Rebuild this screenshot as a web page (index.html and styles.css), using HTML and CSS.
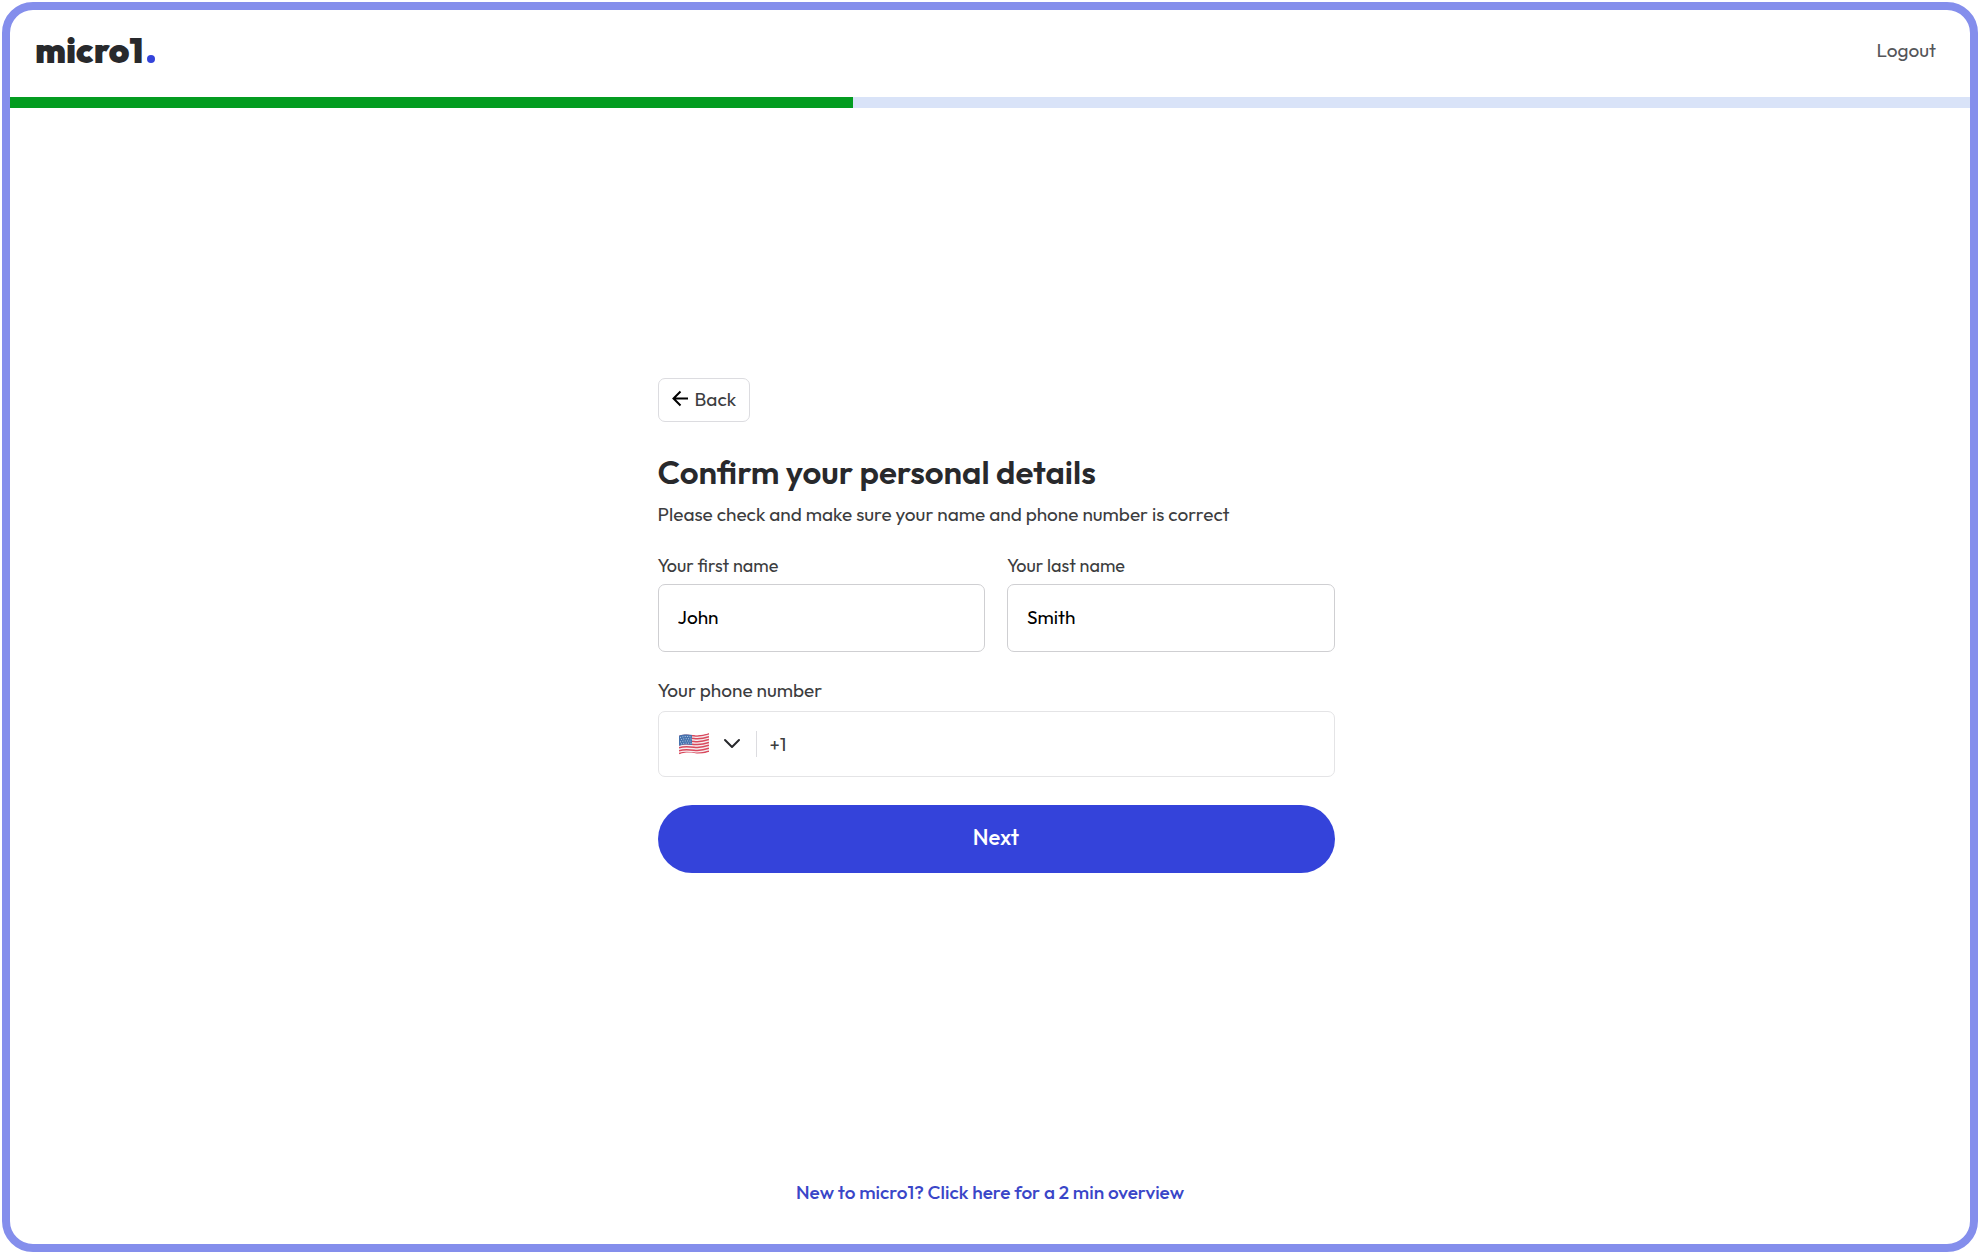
FILE: index.html
```html
<!DOCTYPE html>
<html lang="en">
<head>
    <meta charset="UTF-8">
    <meta name="viewport" content="width=device-width, initial-scale=1.0">
    <title>micro1 - Confirm your personal details</title>
    <link rel="stylesheet" href="styles.css">
</head>
<body>

    <div class="frame">
        <header class="header">
            <a href="#" class="logo">micro1<span class="logo-dot"></span></a>
            <button type="button" class="logout-button">Logout</button>
        </header>

        <!-- Onboarding progress -->
        <div class="progress" role="progressbar" aria-valuenow="43" aria-valuemin="0" aria-valuemax="100">
            <div class="progress-bar" style="width: 43%"></div>
        </div>

        <main class="main">
            <form class="details-form">
                <button type="button" class="back-button">
                    <svg width="16" height="17" viewBox="0 0 16 17" fill="none" stroke="#000" stroke-width="2">
                        <path d="M16 8.5H2M8.5 1.5L1.5 8.5L8.5 15.5"/>
                    </svg>
                    Back
                </button>

                <h1>Confirm your personal details</h1>
                <p class="subtitle">Please check and make sure your name and phone number is correct</p>

                <div class="name-row">
                    <div class="field">
                        <label for="first-name">Your first name</label>
                        <input type="text" id="first-name" class="input-field" value="John">
                    </div>
                    <div class="field">
                        <label for="last-name">Your last name</label>
                        <input type="text" id="last-name" class="input-field" value="Smith">
                    </div>
                </div>

                <label for="phone" class="phone-label">Your phone number</label>
                <div class="phone-box">
                    <div class="country">
                        <svg class="flag" width="30" height="22" viewBox="0 0 30 22">
                            <defs>
                                <clipPath id="flag-shape">
                                    <path d="M0 2.5C5 0.8 9 1.2 15 2C20 2.6 25 1.8 30 0V19C25 20.8 20 21 15 20C9 19.2 5 19.5 0 21.5Z"/>
                                </clipPath>
                            </defs>
                            <g clip-path="url(#flag-shape)">
                                <rect width="30" height="22" fill="#f6eef0"/>
                                <g fill="none" stroke="#d9485c" stroke-width="1.5">
                                    <path d="M0 3.2C5 1.5 9 1.9 15 2.7C20 3.3 25 2.5 30 .7"/>
                                    <path d="M0 6.1C5 4.4 9 4.8 15 5.6C20 6.2 25 5.4 30 3.6"/>
                                    <path d="M0 9C5 7.3 9 7.7 15 8.5C20 9.1 25 8.3 30 6.5"/>
                                    <path d="M0 11.9C5 10.2 9 10.6 15 11.4C20 12 25 11.2 30 9.4"/>
                                    <path d="M0 14.8C5 13.1 9 13.5 15 14.3C20 14.9 25 14.1 30 12.3"/>
                                    <path d="M0 17.7C5 16 9 16.4 15 17.2C20 17.8 25 17 30 15.2"/>
                                    <path d="M0 20.6C5 18.9 9 19.3 15 20.1C20 20.7 25 19.9 30 18.1"/>
                                </g>
                                <path d="M0 2.5C5 .8 9 1.2 13 1.8V12C9 11.2 5 11 0 12.8Z" fill="#4672ae"/>
                                <g fill="none" stroke="#b9cce4" stroke-width="1" stroke-dasharray="1 1.4">
                                    <path d="M1 4.5C5 3.2 9 3.2 13 4"/>
                                    <path d="M2 6.6C5 5.5 9 5.5 13 6.2"/>
                                    <path d="M1 9C5 7.7 9 7.7 13 8.4"/>
                                    <path d="M2 11C5 9.9 9 9.9 13 10.5"/>
                                </g>
                            </g>
                        </svg>
                        <svg width="18" height="11" viewBox="0 0 18 11" fill="none" stroke="#28292c" stroke-width="2" stroke-linecap="round" stroke-linejoin="round">
                            <path d="M2 2L9 9L16 2"/>
                        </svg>
                        <select class="country-select" aria-label="Country">
                            <option value="us" selected>United States</option>
                            <option value="gb">United Kingdom</option>
                            <option value="in">India</option>
                        </select>
                    </div>
                    <input type="tel" id="phone" class="phone-input" value="+1">
                </div>

                <button type="submit" class="next-button">Next</button>
            </form>
        </main>

        <footer class="footer">
            <a href="#" class="overview-link">New to micro1? Click here for a 2 min overview</a>
        </footer>
    </div>

</body>
</html>
```
FILE: styles.css
```css
* {
    box-sizing: border-box;
}

body {
    margin: 0;
    padding: 2px 0 1px 2px;
    background-color: #fff;
    color: #28292c;
    font-family: 'Outfit', 'Lato', sans-serif;
    font-size: 19px;
    line-height: 24px;
}

button, input, select {
    font-family: inherit;
    font-size: inherit;
}

button {
    cursor: pointer;
}

.frame {
    display: flex;
    flex-direction: column;
    min-height: calc(100vh - 3px);
    border: 8px solid #848eec;
    border-radius: 31px;
    background-color: #fff;
}

.header {
    display: flex;
    justify-content: space-between;
    align-items: center;
    height: 87px;
    padding: 0 34px 8px 25px;
}

.logo {
    display: flex;
    align-items: baseline;
    gap: 4px;
    color: #28292c;
    font-size: 35px;
    font-weight: 900;
    line-height: 40px;
    text-decoration: none;
}

.logo-dot {
    width: 8px;
    height: 8px;
    border-radius: 50%;
    background-color: #3443da;
}

.logout-button {
    padding: 0;
    border: none;
    background: none;
    color: #55565a;
}

.progress {
    height: 11px;
    background-color: #d9e3f8;
}

.progress-bar {
    height: 100%;
    background-color: #039c20;
}

.main {
    display: flex;
    flex: 1;
    justify-content: center;
    align-items: center;
    padding-left: 12px;
}

.details-form {
    width: 100%;
    max-width: 677px;
}

.back-button {
    display: flex;
    align-items: center;
    gap: 7px;
    height: 44px;
    padding: 0 13px 2px;
    border: 1px solid #dcdce0;
    border-radius: 7px;
    background-color: #fff;
    color: #3c3d40;
}

h1 {
    margin: 28px 0 8px;
    font-size: 33px;
    font-weight: 600;
    line-height: 44px;
}

.subtitle {
    margin: 0 0 28px;
    color: #3c3d40;
}

.name-row {
    display: flex;
    gap: 22px;
    margin-bottom: 26px;
}

.field {
    flex: 1;
}

label {
    display: block;
    margin-bottom: 6px;
    color: #3c3d40;
    font-size: 18px;
}

.input-field {
    width: 100%;
    height: 68px;
    padding: 0 19px 2px;
    border: 1px solid #cfcfd2;
    border-radius: 7px;
    color: #000;
}

.phone-label {
    margin-bottom: 9px;
    font-size: 19px;
}

.phone-box {
    display: flex;
    align-items: center;
    height: 66px;
    margin-bottom: 28px;
    padding: 0 20px;
    border: 1px solid #e4e4e6;
    border-radius: 7px;
}

.country {
    position: relative;
    display: flex;
    align-items: center;
    gap: 14px;
    height: 26px;
    padding-right: 15px;
    border-right: 1px solid #dcdce0;
}

/* the native select sits over the flag and the arrow */
.country-select {
    position: absolute;
    inset: 0;
    width: 100%;
    opacity: 0;
    cursor: pointer;
}

.phone-input {
    flex: 1;
    padding: 0 13px;
    border: none;
    outline: none;
    color: #3c3d40;
}

.next-button {
    display: block;
    width: 100%;
    height: 68px;
    padding-bottom: 4px;
    border: none;
    border-radius: 34px;
    background-color: #3443da;
    color: #fff;
    font-size: 22px;
    font-weight: 500;
}

.footer {
    padding: 38px 20px 40px;
    text-align: center;
}

.overview-link {
    color: #3a46c8;
    font-weight: 500;
    text-decoration: none;
}
```
